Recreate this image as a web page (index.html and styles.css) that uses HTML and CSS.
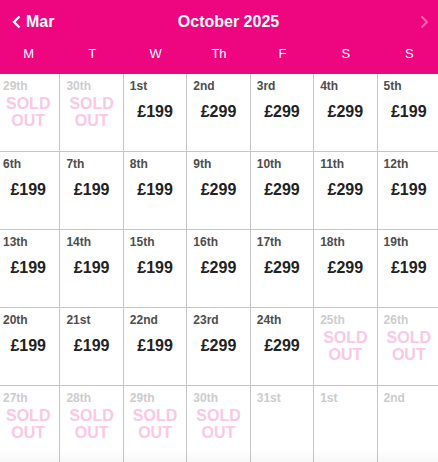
FILE: index.html
```html
<!DOCTYPE html>
<html lang="en">
<head>
    <meta charset="UTF-8">
    <meta name="viewport" content="width=device-width, initial-scale=1.0">
    <title>October 2025</title>
    <link rel="stylesheet" href="styles.css">
</head>
<body>
    <div class="calendar">
        <div class="cal-header">
            <div class="cal-nav">
                <a class="nav-prev" href="#">
                    <svg width="9" height="14" viewBox="0 0 9 14"><polyline points="7.5,1.5 2,7 7.5,12.5" fill="none" stroke="#fff" stroke-width="2.4"/></svg>
                    <span>Mar</span>
                </a>
                <div class="cal-title">October 2025</div>
                <a class="nav-next" href="#">
                    <svg width="9" height="14" viewBox="0 0 9 14"><polyline points="1.5,1.5 7,7 1.5,12.5" fill="none" stroke="#f664ad" stroke-width="2"/></svg>
                </a>
            </div>
            <div class="weekdays">
                <div>M</div><div>T</div><div>W</div><div>Th</div><div>F</div><div>S</div><div>S</div>
            </div>
        </div>

        <div class="days">
            <div class="day off"><div class="date">29th</div><div class="body sold">SOLD<br>OUT</div></div>
            <div class="day off"><div class="date">30th</div><div class="body sold">SOLD<br>OUT</div></div>
            <div class="day"><div class="date">1st</div><div class="body price">£199</div></div>
            <div class="day"><div class="date">2nd</div><div class="body price">£299</div></div>
            <div class="day"><div class="date">3rd</div><div class="body price">£299</div></div>
            <div class="day"><div class="date">4th</div><div class="body price">£299</div></div>
            <div class="day"><div class="date">5th</div><div class="body price">£199</div></div>

            <div class="day"><div class="date">6th</div><div class="body price">£199</div></div>
            <div class="day"><div class="date">7th</div><div class="body price">£199</div></div>
            <div class="day"><div class="date">8th</div><div class="body price">£199</div></div>
            <div class="day"><div class="date">9th</div><div class="body price">£299</div></div>
            <div class="day"><div class="date">10th</div><div class="body price">£299</div></div>
            <div class="day"><div class="date">11th</div><div class="body price">£299</div></div>
            <div class="day"><div class="date">12th</div><div class="body price">£199</div></div>

            <div class="day"><div class="date">13th</div><div class="body price">£199</div></div>
            <div class="day"><div class="date">14th</div><div class="body price">£199</div></div>
            <div class="day"><div class="date">15th</div><div class="body price">£199</div></div>
            <div class="day"><div class="date">16th</div><div class="body price">£299</div></div>
            <div class="day"><div class="date">17th</div><div class="body price">£299</div></div>
            <div class="day"><div class="date">18th</div><div class="body price">£299</div></div>
            <div class="day"><div class="date">19th</div><div class="body price">£199</div></div>

            <div class="day"><div class="date">20th</div><div class="body price">£199</div></div>
            <div class="day"><div class="date">21st</div><div class="body price">£199</div></div>
            <div class="day"><div class="date">22nd</div><div class="body price">£199</div></div>
            <div class="day"><div class="date">23rd</div><div class="body price">£299</div></div>
            <div class="day"><div class="date">24th</div><div class="body price">£299</div></div>
            <div class="day off"><div class="date">25th</div><div class="body sold">SOLD<br>OUT</div></div>
            <div class="day off"><div class="date">26th</div><div class="body sold">SOLD<br>OUT</div></div>

            <div class="day off"><div class="date">27th</div><div class="body sold">SOLD<br>OUT</div></div>
            <div class="day off"><div class="date">28th</div><div class="body sold">SOLD<br>OUT</div></div>
            <div class="day off"><div class="date">29th</div><div class="body sold">SOLD<br>OUT</div></div>
            <div class="day off"><div class="date">30th</div><div class="body sold">SOLD<br>OUT</div></div>
            <div class="day off"><div class="date">31st</div></div>
            <div class="day off"><div class="date">1st</div></div>
            <div class="day off"><div class="date">2nd</div></div>
        </div>
    </div>
    <div class="bottom-fade"></div>
</body>
</html>
```

FILE: styles.css
```css
body {
    font-family: "Liberation Sans", Arial, sans-serif;
    background-color: #fff;
    margin: 0;
    overflow: hidden;
}
.calendar {
    margin: 0 -3px;
}
.cal-header {
    background-color: #ee0580;
    color: #fff;
    height: 74px;
}
.cal-nav {
    display: flex;
    align-items: center;
    height: 43px;
    padding: 0 12px 0 15px;
}
.cal-nav a {
    color: #fff;
    text-decoration: none;
    display: flex;
    align-items: center;
}
.nav-prev {
    width: 60px;
    gap: 5px;
    font-size: 16px;
    font-weight: bold;
}
.nav-prev svg {
    margin-top: 1px;
}
.nav-next {
    width: 44px;
    justify-content: flex-end;
}
.cal-title {
    flex: 1;
    text-align: center;
    font-size: 16px;
    font-weight: bold;
}
.weekdays {
    display: grid;
    grid-template-columns: repeat(7, 1fr);
    padding-top: 4px;
    font-size: 13px;
    line-height: 14px;
    text-align: center;
}
.days {
    display: grid;
    grid-template-columns: repeat(7, 1fr);
    grid-auto-rows: 78px;
}
.day {
    border-right: 1px solid #c6c6c6;
    border-bottom: 1px solid #c6c6c6;
    padding: 5px 6px 0;
}
.date {
    font-size: 12px;
    line-height: 14px;
    font-weight: bold;
    color: #4d4d4d;
}
.off .date {
    color: #cccccc;
}
.body {
    height: 34px;
    margin-top: 2px;
    display: flex;
    align-items: center;
    justify-content: center;
    text-align: center;
    font-weight: bold;
    font-size: 16px;
}
.price {
    color: #222;
    line-height: 18px;
}
.sold {
    color: #fac7e4;
    line-height: 17px;
}
.bottom-fade {
    position: fixed;
    left: 0;
    right: 0;
    bottom: 0;
    height: 12px;
    background: linear-gradient(rgba(0, 0, 0, 0), rgba(0, 0, 0, 0.03));
    pointer-events: none;
}
```
